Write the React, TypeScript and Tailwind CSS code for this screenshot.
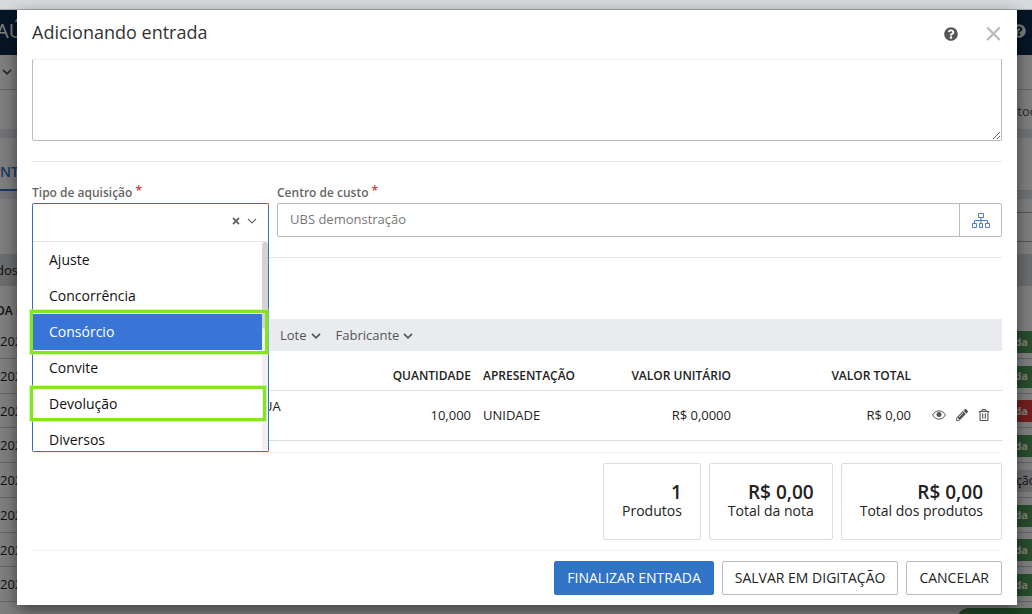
import type { ReactNode } from "react";
import { FaPencilAlt, FaQuestionCircle, FaRegTrashAlt } from "react-icons/fa";

const options = ["Ajuste", "Concorrência", "Consórcio", "Convite", "Devolução", "Diversos"];

const rows = [
  { badge: "da", color: "bg-[#4e9a5c]" },
  { badge: "da", color: "bg-[#4e9a5c]" },
  { badge: "da", color: "bg-[#e0403c]" },
  { badge: "da", color: "bg-[#4e9a5c]" },
  { badge: "ção", color: "bg-[#dcdde1]" },
  { badge: "da", color: "bg-[#4e9a5c]" },
  { badge: "da", color: "bg-[#4e9a5c]" },
  { badge: "da", color: "bg-[#4e9a5c]" },
];

export default function App() {
  return (
    <div className="relative h-screen overflow-hidden bg-[#d9dade] font-['Open_Sans','Noto_Sans',sans-serif] text-[13px] text-[#222]">
      <div className="h-[10px] border-b border-[#a9aab0]" />
      <ListPage />
      <div className="absolute inset-x-0 top-[10px] bottom-0 bg-black/50 pr-[15px] pl-[17px]">
        <EntryDialog />
      </div>
    </div>
  );
}

function ListPage() {
  return (
    <div className="bg-white">
      <header className="flex h-[45px] items-center justify-between bg-[#0e2a4b] pr-[6px] pb-[3px] text-xl text-white">
        <span className="-ml-1">AÚ</span>
        <FaQuestionCircle className="size-[14px]" />
      </header>
      <nav className="flex h-[35px] items-center border-b border-[#ccc] pl-[2px] text-[#555]">
        <Chevron />
      </nav>
      <div className="flex h-[39px] items-center justify-end pt-1 text-[#555]">
        <span className="-mr-1">toc</span>
      </div>
      <div className="h-[9px] bg-[#e4e6ea]" />
      <div className="h-[53px] border-b border-[#ddd]">
        <span className="inline-flex h-[53px] w-[120px] items-center border-b-2 border-[#3173c5] pt-4 text-sm font-semibold text-[#3173c5]">
          NT
        </span>
      </div>
      <div className="h-2 bg-[#e4e6ea]" />
      <div className="h-[55px] py-[13px]">
        <div className="ml-auto h-[30px] w-[200px] border-y border-[#aaa]" />
      </div>
      <div className="flex h-8 items-center bg-[#d9dbdf] pt-[2px]">
        <span className="-ml-1">dos</span>
      </div>
      <div className="flex h-[38px] items-center pt-[11px] text-xs font-semibold whitespace-nowrap">
        <span className="-ml-1">DA E</span>
      </div>
      <div className="grid h-[278px] auto-rows-fr">
        {rows.map((row, i) => (
          <div key={i} className="flex items-center justify-between border-b border-[#ccc] pt-[2px]">
            <span>202</span>
            {row.badge === "da" ? (
              <span className={`flex h-[22px] w-[80px] items-center justify-end pr-1 text-[11px] font-bold text-white ${row.color}`}>
                {row.badge}
              </span>
            ) : (
              <span className={`flex h-[22px] w-[80px] items-center justify-end text-xs ${row.color}`}>
                <span className="-mr-1">{row.badge}</span>
              </span>
            )}
          </div>
        ))}
      </div>
      <div className="flex h-10 justify-end pt-[6px]">
        <div className="h-10 w-[75px] rounded-tl-xl bg-[#3c8d4c]" />
      </div>
    </div>
  );
}

function EntryDialog() {
  return (
    <div role="dialog" aria-labelledby="dialog-title" className="bg-white px-[15px] pb-[10px] shadow-[0_5px_15px_rgba(0,0,0,0.5)]">
      <div className="flex h-[49px] items-center justify-between pb-[2px]">
        <h1 id="dialog-title" className="pb-1 text-lg text-[#333]">Adicionando entrada</h1>
        <div className="flex items-center gap-7">
          <button aria-label="Ajuda" className="text-[#555]">
            <FaQuestionCircle className="size-[14px]" />
          </button>
          <button aria-label="Fechar" className="text-[#bbb]">
            <svg viewBox="0 0 16 16" className="size-4" fill="none" stroke="currentColor" strokeWidth="2.400">
              <path d="M1.200 1.500l12.500 12.500M13.700 1.500L1.200 14" />
            </svg>
          </button>
        </div>
      </div>

      <textarea aria-label="Observações" className="block h-[82px] w-full resize-y rounded-b-xs border border-[#bbb] border-t-[#eee] outline-none" />

      <div className="mt-5 flex gap-2 border-y border-[#e9e9ec] pt-[20px] pb-[20px]">
        <div className="w-[237px]">
          <FieldLabel htmlFor="tipo">Tipo de aquisição</FieldLabel>
          <TypeSelect />
        </div>
        <div className="flex-1">
          <FieldLabel htmlFor="centro">Centro de custo</FieldLabel>
          <div className="flex h-[34px] rounded-xs border border-[#bbb]">
            <input id="centro" defaultValue="UBS demonstração" className="min-w-0 flex-1 px-3 text-[#777] outline-none" />
            <button aria-label="Escolher centro de custo" className="flex w-[42px] items-center justify-center border-l border-[#bbb] text-[#4b7fcc]">
              <svg viewBox="0 0 18 15" className="h-[15px] w-[18px]" fill="none" stroke="currentColor">
                <path d="M6.500 .5h5v4h-5zM.5 10.500h4v4h-4zM7.500 10.500h3v4h-3zM13.500 10.500h4v4h-4zM9 4.500v6M2.500 10.500v-3h13v3" />
              </svg>
            </button>
          </div>
        </div>
      </div>

      <div className="mt-[61px] flex h-8 items-center gap-[15px] bg-[#eaebef] pt-px pl-[248px] text-[#555]">
        <button className="flex items-center gap-1">Lote <Chevron /></button>
        <button className="flex items-center gap-1">Fabricante <Chevron /></button>
      </div>

      <ProductTable />

      <div className="mt-[11px] flex justify-end gap-2 border-y border-[#f1f1f6] py-[10px]">
        <Total value="1" label="Produtos" />
        <Total value="R$ 0,00" label="Total da nota" />
        <Total value="R$ 0,00" label="Total dos produtos" />
      </div>

      <div className="flex justify-end gap-2 pt-[10px] text-sm">
        <button className="h-[34px] rounded-xs border border-[#3173c5] bg-[#3173c5] px-3 text-white">FINALIZAR ENTRADA</button>
        <button className="h-[34px] rounded-xs border border-[#bbb] px-3">SALVAR EM DIGITAÇÃO</button>
        <button className="h-[34px] rounded-xs border border-[#bbb] px-3">CANCELAR</button>
      </div>
    </div>
  );
}

function TypeSelect() {
  return (
    <div className="relative">
      <div className="flex h-[34px] items-center rounded-t-xs border border-b-0 border-[#3173c5] pr-[11px] text-[#666]">
        <input id="tipo" role="combobox" aria-expanded="true" aria-controls="tipo-opcoes" className="min-w-0 flex-1 px-4 outline-none" />
        <button aria-label="Limpar" className="mr-[7px]">
          <svg viewBox="0 0 8 8" className="size-2" fill="none" stroke="currentColor" strokeWidth="1.800">
            <path d="M1 1l6 6M7 1L1 7" />
          </svg>
        </button>
        <Chevron thin />
      </div>
      <div className="absolute inset-x-0 top-full z-10 rounded-b-xs border border-t-0 border-[#3173c5] bg-white pt-1">
        <div className="flex h-[210px] overflow-hidden border-t border-[#e5e5e5]">
          <ul id="tipo-opcoes" role="listbox" className="flex-1 text-sm">
            {options.map((option) => (
              <li
                key={option}
                role="option"
                aria-selected={option === "Consórcio"}
                className="flex h-9 items-center px-4 text-[#111] aria-selected:bg-[#3875d7] aria-selected:text-white"
              >
                {option}
              </li>
            ))}
          </ul>
          <div className="w-[6px] rounded-full bg-[#efefef]">
            <div className="h-[87px] rounded-full bg-[#d3d3d3]" />
          </div>
        </div>
        <div className="absolute top-[73px] right-0 -left-[3px] h-[44px] border-3 border-[#84e61e] ring-1 ring-[#b9f07c]/60" />
        <div className="absolute top-[149px] right-[2px] -left-[3px] h-[35px] border-3 border-[#84e61e] ring-1 ring-[#b9f07c]/60" />
      </div>
    </div>
  );
}

function ProductTable() {
  return (
    <table className="w-full table-fixed border-collapse">
      <colgroup>
        <col />
        <col className="w-[120px]" />
        <col className="w-[120px]" />
        <col className="w-[140px]" />
        <col className="w-[180px]" />
        <col className="w-[85px]" />
      </colgroup>
      <thead>
        <tr className="h-[39px] border-b border-[#ddd] text-right text-xs">
          <th />
          <th className="px-[6px] pt-3 font-semibold">QUANTIDADE</th>
          <th className="px-[6px] pt-3 text-left font-semibold">APRESENTAÇÃO</th>
          <th className="px-[6px] pt-3 font-semibold">VALOR UNITÁRIO</th>
          <th className="px-[6px] pt-3 font-semibold">VALOR TOTAL</th>
          <th />
        </tr>
      </thead>
      <tbody>
        <tr className="h-[50px] border-b border-[#ddd] text-right">
          <td className="pt-[6px] pl-[231px] text-left align-top">UA</td>
          <td className="px-[6px] pt-[2px]">10,000</td>
          <td className="px-[6px] pt-[2px] text-left">UNIDADE</td>
          <td className="px-[6px] pt-[2px]">R$ 0,0000</td>
          <td className="px-[6px] pt-[2px]">R$ 0,00</td>
          <td>
            <div className="flex items-center justify-end gap-[10px] pr-3 text-[#555]">
              <button aria-label="Visualizar">
                <svg viewBox="0 0 14 10" className="h-[10px] w-[14px]" fill="none" stroke="currentColor">
                  <path d="M.6 5C3.500-.5 10.500-.5 13.400 5C10.500 10.500 3.500 10.500 .6 5z" />
                  <circle cx="7" cy="4.500" r="2.500" fill="currentColor" stroke="none" />
                </svg>
              </button>
              <button aria-label="Editar"><FaPencilAlt className="size-3" /></button>
              <button aria-label="Excluir"><FaRegTrashAlt className="size-3" /></button>
            </div>
          </td>
        </tr>
      </tbody>
    </table>
  );
}

interface FieldLabelProps {
  htmlFor: string;
  children: ReactNode;
}

function FieldLabel({ htmlFor, children }: FieldLabelProps) {
  return (
    <label htmlFor={htmlFor} className="flex h-[21px] items-center gap-[3px] text-xs font-semibold text-[#666]">
      {children}
      <span className="pb-1 leading-4 text-[#e0302c]">*</span>
    </label>
  );
}

interface TotalProps {
  value: string;
  label: string;
}

function Total({ value, label }: TotalProps) {
  return (
    <div className="h-[77px] rounded-xs border border-[#ddd] px-[18px] pt-[18px] text-right text-sm">
      <div className="text-[19px] leading-5 font-semibold">{value}</div>
      <div className="leading-[18px]">{label}</div>
    </div>
  );
}

function Chevron({ thin = false }: { thin?: boolean }) {
  return (
    <svg viewBox="0 0 10 6" className="h-[6px] w-[10px]" fill="none" stroke="currentColor" strokeWidth={thin ? 1.2 : 1.7}>
      <path d="M1 .8l4 4l4-4" />
    </svg>
  );
}
